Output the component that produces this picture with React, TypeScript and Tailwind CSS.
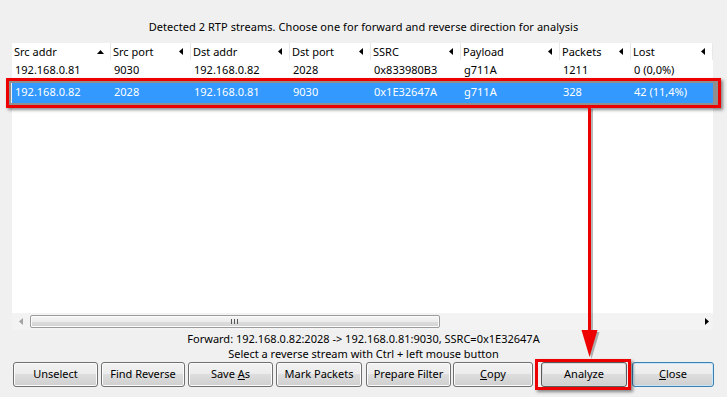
import React from "react";

const cols = [
  { label: "Src addr", w: "w-[99px]", sort: "up" },
  { label: "Src port", w: "w-[80px]", sort: "left" },
  { label: "Dst addr", w: "w-[99px]", sort: "left" },
  { label: "Dst port", w: "w-[81px]", sort: "left" },
  { label: "SSRC", w: "w-[90px]", sort: "left" },
  { label: "Payload", w: "w-[99px]", sort: "left" },
  { label: "Packets", w: "w-[71px]", sort: "left" },
  { label: "Lost", w: "w-[82px]", sort: "left" },
];

const rows = [
  ["192.168.0.81", "9030", "192.168.0.82", "2028", "0x833980B3", "g711A", "1211", "0 (0,0%)"],
  ["192.168.0.82", "2028", "192.168.0.81", "9030", "0x1E32647A", "g711A", "328", "42 (11,4%)"],
];

function UpTri() {
  return (
    <svg width="7" height="4" viewBox="0 0 7 4" className="absolute right-[6px] top-[7px]">
      <polygon points="0,4 7,4 3.5,0" fill="#000" />
    </svg>
  );
}
function LeftTri() {
  return (
    <svg width="4" height="7" viewBox="0 0 4 7" className="absolute right-[7px] top-[5px]">
      <polygon points="4,0 4,7 0,3.5" fill="#000" />
    </svg>
  );
}

const btnBase =
  "h-[25px] flex items-center justify-center rounded-[3px] border text-black bg-[linear-gradient(to_bottom,#f2f2f2_0%,#ebebeb_50%,#dddddd_50%,#cfcfcf_100%)]";

export default function App() {
  return (
    <div className="relative w-[727px] h-[397px] overflow-hidden bg-[#f0f0f0] text-[11px] text-black font-['Noto_Sans',sans-serif] flex flex-col">
      <div className="h-[43px] pt-[19px] leading-[15px] text-center tracking-[0.06px]">
        Detected 2 RTP streams. Choose one for forward and reverse direction for analysis
      </div>

      <div className="ml-[12px] w-[701px] h-[287px] bg-white flex flex-col">
        <div className="h-[17px] flex leading-[18px]">
          {cols.map((c, i) => (
            <div key={i} className={`${c.w} relative pl-[2px] border-r border-[#e8e8e8]`}>
              {c.label}
              {c.sort === "up" ? <UpTri /> : <LeftTri />}
            </div>
          ))}
        </div>
        {rows.map((r, ri) => (
          <div
            key={ri}
            className={
              ri === 1
                ? "h-[22px] flex items-center bg-[#3399ff] text-white"
                : "h-[21px] flex items-center"
            }
          >
            {r.map((v, ci) => (
              <div key={ci} className={`${cols[ci].w} pl-[3px] whitespace-nowrap`}>
                {v}
              </div>
            ))}
          </div>
        ))}
        <div className="flex-1" />
        <div className="h-[17px] relative bg-[#f3f3f3]">
          <svg width="4" height="7" viewBox="0 0 4 7" className="absolute left-[7px] top-[5px]">
            <polygon points="4,0 4,7 0,3.5" fill="#a3a3a3" />
          </svg>
          <div className="absolute left-[18px] top-[2px] w-[410px] h-[13px] rounded-[2px] border border-[#9c9c9c] bg-[linear-gradient(to_bottom,#f6f6f6_0%,#ececec_50%,#dcdcdc_50%,#d4d4d4_100%)] shadow-[inset_0_0_0_1px_#fbfbfb]">
            <div className="absolute left-[200px] top-[3px] flex gap-[2px]">
              <div className="w-[1px] h-[5px] bg-[#555]" />
              <div className="w-[1px] h-[5px] bg-[#555]" />
              <div className="w-[1px] h-[5px] bg-[#555]" />
            </div>
          </div>
          <svg width="4" height="7" viewBox="0 0 4 7" className="absolute left-[693px] top-[5px]">
            <polygon points="0,0 0,7 4,3.5" fill="#000" />
          </svg>
        </div>
      </div>

      <div className="leading-[15px] text-center mt-[1px]">
        Forward: 192.168.0.82:2028 -&gt; 192.168.0.81:9030, SSRC=0x1E32647A
      </div>
      <div className="leading-[15px] text-center">Select a reverse stream with Ctrl + left mouse button</div>

      <div className="flex mt-[1px] ml-[13px]">
        <div className={`${btnBase} w-[85px] border-[#707070] shadow-[inset_0_0_0_1px_#fcfcfc]`}>Unselect</div>
        <div className={`${btnBase} w-[84px] ml-[3px] border-[#707070] shadow-[inset_0_0_0_1px_#fcfcfc]`}>Find Reverse</div>
        <div className={`${btnBase} w-[85px] ml-[3px] border-[#707070] shadow-[inset_0_0_0_1px_#fcfcfc]`}>
          <span>
            Save <span className="underline">A</span>s
          </span>
        </div>
        <div className={`${btnBase} w-[86px] ml-[3px] border-[#707070] shadow-[inset_0_0_0_1px_#fcfcfc]`}>Mark Packets</div>
        <div className={`${btnBase} w-[85px] ml-[4px] border-[#707070] shadow-[inset_0_0_0_1px_#fcfcfc]`}>Prepare Filter</div>
        <div className={`${btnBase} w-[80px] ml-[2px] border-[#707070] shadow-[inset_0_0_0_1px_#fcfcfc]`}>
          <span>
            <span className="underline">C</span>opy
          </span>
        </div>
        <div className={`${btnBase} w-[86px] ml-[8px] border-[#5a5a5a] shadow-[inset_0_0_0_1px_#d8d8d8]`}>Analyze</div>
        <div className={`${btnBase} w-[82px] ml-[5px] border-[#3c7fb1] shadow-[inset_0_0_0_1px_#c8e6fa]`}>
          <span>
            <span className="underline">C</span>lose
          </span>
        </div>
      </div>

      {/* annotation: red box around selected row */}
      <div className="absolute left-[6px] top-[78px] w-[715px] h-[30px] border-[3px] border-[#ee0000] shadow-[2px_2px_3px_rgba(0,0,0,0.45),inset_0_0_0_2px_#8f8f8f,inset_-5px_0_0_0_#8f8f8f]" />

      {/* annotation: red arrow */}
      <svg
        width="30"
        height="256"
        viewBox="0 0 30 256"
        className="absolute left-[578px] top-[104px]"
      >
        <rect x="12" y="5" width="3" height="228" fill="rgba(0,0,0,0.28)" />
        <polygon points="5.5,228 21.5,228 13.5,255" fill="rgba(0,0,0,0.28)" />
        <rect x="10" y="3" width="3" height="228" fill="#ee0000" />
        <polygon points="3.5,226 19.5,226 11.5,253" fill="#ee0000" />
      </svg>

      {/* annotation: red box around Analyze */}
      <div className="absolute left-[535px] top-[359px] w-[96px] h-[31px] border-[3px] border-[#ee0000] shadow-[2px_2px_3px_rgba(0,0,0,0.45)]" />
    </div>
  );
}
